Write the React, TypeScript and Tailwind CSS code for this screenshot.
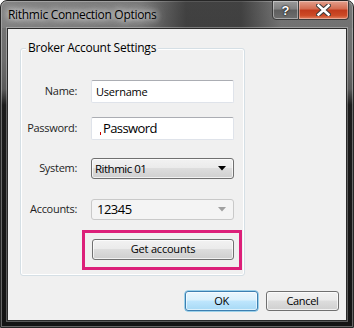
import React from "react";

const font = { fontFamily: '"Open Sans", "Noto Sans", Arial, sans-serif' };

const btnBg = {
  background: "linear-gradient(to bottom, #f2f2f2 0%, #ebebeb 45%, #dddddd 50%, #cfcfcf 100%)",
  boxShadow: "inset 0 0 0 1px rgba(255,255,255,0.7)",
};

function Row({ label, children, className }: { label: string; children: React.ReactNode; className: string }) {
  return (
    <div className={"flex items-center " + className}>
      <div className="w-[56px] text-right text-[11px] tracking-[-0.3px] text-[#1e1e1e]">{label}</div>
      <div className="ml-[14px]">{children}</div>
    </div>
  );
}

export default function App() {
  return (
    <div className="w-[354px] h-[328px] bg-white" style={font}>
      <div
        className="w-[354px] h-[328px] rounded-t-[7px] border border-[#262626] flex flex-col overflow-hidden"
        style={{
          background:
            "linear-gradient(to bottom, #7a7a7a 0px, #6c6c6c 60px, #5a5a5a 88px, #1c1c1c 104px, #141414 100%)",
          boxShadow: "inset 0 0 0 1px rgba(255,255,255,0.35)",
        }}
      >
        {/* title bar */}
        <div
          className="h-[27px] flex items-start shrink-0"
          style={{
            background:
              "linear-gradient(to right, rgba(150,150,150,0.35) 0px, rgba(120,120,120,0.2) 140px, rgba(20,20,20,0.55) 185px, rgba(20,20,20,0.55) 240px, rgba(90,90,90,0.1) 280px)",
          }}
        >
          <div
            className="pl-[7px] pt-[5px] text-[12px] tracking-[-0.3px] text-black"
            style={{ textShadow: "0 0 6px rgba(255,255,255,0.95), 0 0 10px rgba(255,255,255,0.8), 0 0 14px rgba(255,255,255,0.6)" }}
          >
            Rithmic Connection Options
          </div>
          <div className="ml-auto mr-[4px] flex h-[19px] mt-[-1px]">
            <div
              className="w-[27px] h-[20px] border border-[#3b3b3b] rounded-bl-[4px] flex items-center justify-center"
              style={{
                background: "linear-gradient(to bottom, #9a9a9a 0%, #808080 45%, #5e5e5e 50%, #6e6e6e 100%)",
                boxShadow: "inset 0 0 0 1px rgba(255,255,255,0.4)",
              }}
            >
              <span className="text-white font-bold text-[13px] leading-none" style={{ fontFamily: "Arial, sans-serif", textShadow: "0 0 2px #000, 0 0 1px #000" }}>?</span>
            </div>
            <div
              className="w-[50px] h-[20px] border border-[#3b3b3b] border-l-0 rounded-br-[4px] flex items-center justify-center"
              style={{
                background: "linear-gradient(to bottom, #e3a08d 0%, #d36a4f 45%, #c13a1c 50%, #cc4a26 80%, #e08060 100%)",
                boxShadow: "inset 0 0 0 1px rgba(255,255,255,0.35)",
              }}
            >
              <svg width="15" height="12" viewBox="0 0 15 12">
                <path d="M2.5 1.5 L12.5 10.5 M12.5 1.5 L2.5 10.5" stroke="#3a3a3a" strokeWidth="4.6" strokeLinecap="square" />
                <path d="M2.5 1.5 L12.5 10.5 M12.5 1.5 L2.5 10.5" stroke="#ffffff" strokeWidth="2.6" strokeLinecap="square" />
              </svg>
            </div>
          </div>
        </div>

        {/* client area */}
        <div className="mx-[6px] mb-[6px] flex-1 border border-[#2a2a2a]" style={{ boxShadow: "0 0 0 1px rgba(255,255,255,0.3)" }}>
          <div className="w-full h-full bg-[#f0f0f0] flex flex-col">
            {/* group box */}
            <div className="relative ml-[12px] mt-[19px] w-[225px] h-[228px] border border-[#d5dfe5] rounded-[3px]" style={{ boxShadow: "inset 0 0 0 1px #ffffff" }}>
              <div className="absolute left-[5px] top-[-10px] px-[2px] bg-[#f0f0f0] text-[12px] tracking-[-0.25px] text-black leading-[18px]">Broker Account Settings</div>

              <Row label="Name:" className="mt-[31px]">
                <div className="h-[23px] w-[143px] bg-white border border-[#dfe3ea] border-t-[#abadb3] rounded-[2px] flex items-center pl-[4px]">
                  <span className="text-[11px] tracking-[-0.2px] text-black leading-none">Username</span>
                </div>
              </Row>
              <Row label="Password:" className="mt-[14px]">
                <div className="h-[23px] w-[143px] bg-white border border-[#dfe3ea] border-t-[#abadb3] rounded-[2px] flex items-center relative">
                  <span className="absolute left-[8px] top-[14px] w-[1px] h-[3px] bg-[#cc0000]" />
                  <span className="text-[13px] tracking-[-0.6px] text-black leading-none ml-[11px]">Password</span>
                </div>
              </Row>
              <Row label="System:" className="mt-[18px]">
                <div
                  className="h-[21px] w-[143px] border border-[#707070] rounded-[3px] flex items-center pl-[3px] pr-[7px]"
                  style={btnBg}
                >
                  <span className="text-[11.5px] tracking-[-0.5px] text-black">Rithmic 01</span>
                  <svg className="ml-auto" width="8" height="5" viewBox="0 0 8 5">
                    <path d="M0 0 H8 L4 4.5 Z" fill="#000" />
                  </svg>
                </div>
              </Row>
              <Row label="Accounts:" className="mt-[20px]">
                <div className="h-[21px] w-[143px] border border-[#c9c9c9] rounded-[3px] bg-[#f4f4f4] flex items-center pl-[5px] pr-[7px]">
                  <span className="text-[13px] tracking-[-0.5px] text-black leading-none">12345</span>
                  <svg className="ml-auto" width="8" height="5" viewBox="0 0 8 5">
                    <path d="M0 0 H8 L4 4.5 Z" fill="#a0a0a0" />
                  </svg>
                </div>
              </Row>

              <div className="ml-[61px] mt-[10px] w-[160px] h-[40px] border-[3px] border-[#dc1f79]">
                <div
                  className="ml-[7px] mt-[6px] w-[142px] h-[21px] border border-[#707070] rounded-[3px] flex items-center justify-center"
                  style={btnBg}
                >
                  <span className="text-[11px] tracking-[-0.2px] text-black">Get accounts</span>
                </div>
              </div>
            </div>

            {/* bottom buttons */}
            <div className="flex ml-[177px] mt-[15px] gap-[8px]">
              <div
                className="w-[73px] h-[20px] border border-[#3c7fb1] rounded-[3px] flex items-center justify-center"
                style={{ background: "linear-gradient(to bottom, #eaf6fd 0%, #d9f0fc 45%, #bee6fd 50%, #a7d9f5 100%)", boxShadow: "inset 0 0 0 1px rgba(255,255,255,0.6), 0 0 0 0.5px #48b1e4" }}
              >
                <span className="text-[11px] tracking-[-0.3px] text-black">OK</span>
              </div>
              <div
                className="w-[73px] h-[20px] border border-[#707070] rounded-[3px] flex items-center justify-center"
                style={btnBg}
              >
                <span className="text-[11px] tracking-[-0.3px] text-black">Cancel</span>
              </div>
            </div>
          </div>
        </div>
      </div>
    </div>
  );
}
